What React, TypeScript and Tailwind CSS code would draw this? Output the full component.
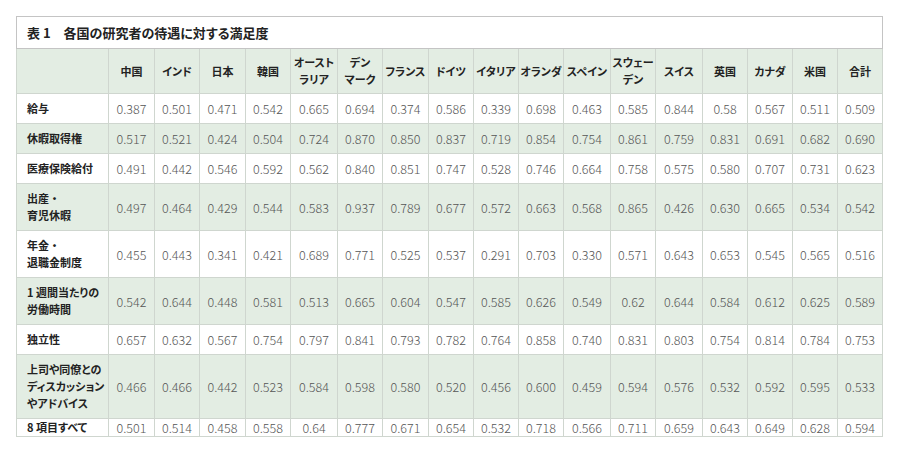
import React from "react";

const font = {
  fontFamily: '"Noto Sans CJK JP", "Noto Sans", sans-serif',
  fontFeatureSettings: '"palt"',
};

const Dot = () => <span className="[font-feature-settings:normal]">・</span>;

const headers: React.ReactNode[] = [
  "中国",
  "インド",
  "日本",
  "韓国",
  <>オースト<br />ラリア</>,
  <>デン<br />マーク</>,
  "フランス",
  "ドイツ",
  "イタリア",
  "オランダ",
  "スペイン",
  <>スウェー<br />デン</>,
  "スイス",
  "英国",
  "カナダ",
  "米国",
  "合計",
];

const colWidths = [92, 46, 45, 46, 45, 47, 45, 46, 45, 45, 45, 47, 45, 47, 45, 45, 45, 45];

const rows: { label: React.ReactNode; values: string[] }[] = [
  {
    label: "給与",
    values: ["0.387", "0.501", "0.471", "0.542", "0.665", "0.694", "0.374", "0.586", "0.339", "0.698", "0.463", "0.585", "0.844", "0.58", "0.567", "0.511", "0.509"],
  },
  {
    label: "休暇取得権",
    values: ["0.517", "0.521", "0.424", "0.504", "0.724", "0.870", "0.850", "0.837", "0.719", "0.854", "0.754", "0.861", "0.759", "0.831", "0.691", "0.682", "0.690"],
  },
  {
    label: "医療保険給付",
    values: ["0.491", "0.442", "0.546", "0.592", "0.562", "0.840", "0.851", "0.747", "0.528", "0.746", "0.664", "0.758", "0.575", "0.580", "0.707", "0.731", "0.623"],
  },
  {
    label: <>出産<Dot /><br />育児休暇</>,
    values: ["0.497", "0.464", "0.429", "0.544", "0.583", "0.937", "0.789", "0.677", "0.572", "0.663", "0.568", "0.865", "0.426", "0.630", "0.665", "0.534", "0.542"],
  },
  {
    label: <>年金<Dot /><br />退職金制度</>,
    values: ["0.455", "0.443", "0.341", "0.421", "0.689", "0.771", "0.525", "0.537", "0.291", "0.703", "0.330", "0.571", "0.643", "0.653", "0.545", "0.565", "0.516"],
  },
  {
    label: <>1 週間当たりの<br />労働時間</>,
    values: ["0.542", "0.644", "0.448", "0.581", "0.513", "0.665", "0.604", "0.547", "0.585", "0.626", "0.549", "0.62", "0.644", "0.584", "0.612", "0.625", "0.589"],
  },
  {
    label: "独立性",
    values: ["0.657", "0.632", "0.567", "0.754", "0.797", "0.841", "0.793", "0.782", "0.764", "0.858", "0.740", "0.831", "0.803", "0.754", "0.814", "0.784", "0.753"],
  },
  {
    label: <>上司や同僚との<br />ディスカッション<br />やアドバイス</>,
    values: ["0.466", "0.466", "0.442", "0.523", "0.584", "0.598", "0.580", "0.520", "0.456", "0.600", "0.459", "0.594", "0.576", "0.532", "0.592", "0.595", "0.533"],
  },
  {
    label: "8 項目すべて",
    values: ["0.501", "0.514", "0.458", "0.558", "0.64", "0.777", "0.671", "0.654", "0.532", "0.718", "0.566", "0.711", "0.659", "0.643", "0.649", "0.628", "0.594"],
  },
];

export default function App() {
  return (
    <div className="w-[900px] h-[455px] bg-white pt-4 pl-4" style={font}>
      <table className="table-fixed border-collapse w-[866px] border border-[#c4c4c4]">
        <colgroup>
          {colWidths.map((w, i) => (
            <col key={i} style={{ width: w }} />
          ))}
        </colgroup>
        <thead>
          <tr>
            <th
              colSpan={18}
              className="h-[32px] text-left font-bold text-[13px] leading-[17px] text-[#222] px-[10px] py-0 border border-[#c4c4c4]"
            >
              表 1　各国の研究者の待遇に対する満足度
            </th>
          </tr>
          <tr className="bg-[#e3ede3]">
            <th className="h-[45px] border border-[#cfd6cf]" />
            {headers.map((h, i) => (
              <th
                key={i}
                className="h-[45px] border border-[#cfd6cf] text-center font-bold text-[11px] leading-[17px] text-[#222] py-0 px-0 whitespace-nowrap"
              >
                {h}
              </th>
            ))}
          </tr>
        </thead>
        <tbody>
          {rows.map((r, i) => {
            const last = i === rows.length - 1;
            const pad = last ? "py-0" : "py-1.5";
            return (
              <tr key={i} className={i % 2 === 1 ? "bg-[#e3ede3]" : "bg-white"}>
                <td
                  className={`border border-[#cfd6cf] text-left font-bold text-[11px] leading-[17px] text-[#222] pl-[10px] pr-0 whitespace-nowrap ${pad}`}
                >
                  {r.label}
                </td>
                {r.values.map((v, j) => (
                  <td
                    key={j}
                    className={`border border-[#cfd6cf] text-center font-light text-[12.5px] leading-[17px] text-[#555] px-0 ${pad}`}
                  >
                    {v}
                  </td>
                ))}
              </tr>
            );
          })}
        </tbody>
      </table>
    </div>
  );
}
